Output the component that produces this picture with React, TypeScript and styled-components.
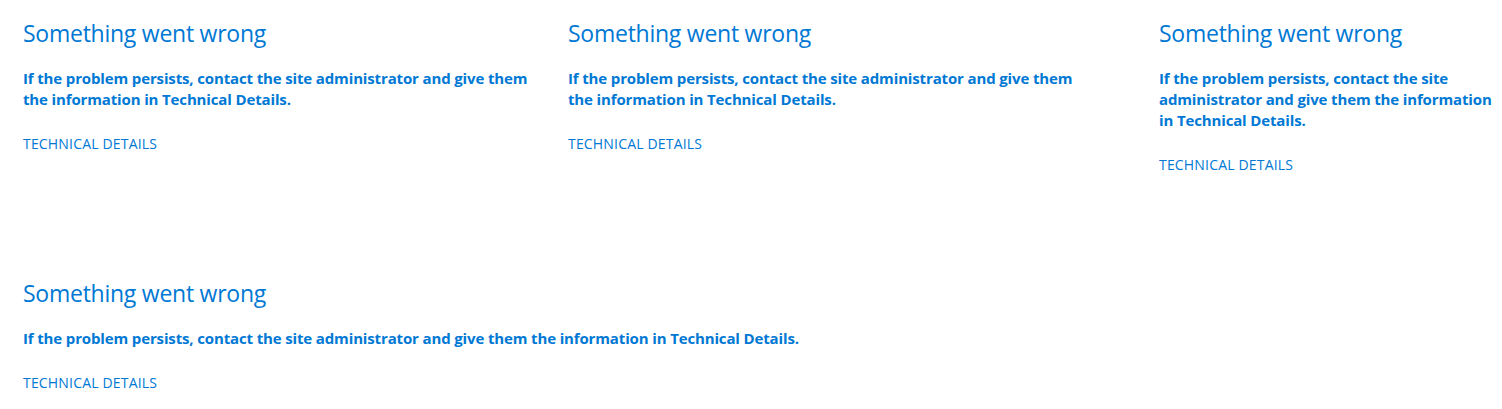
import styled, { createGlobalStyle } from 'styled-components';

const GlobalStyle = createGlobalStyle`
  html, body {
    margin: 0;
    padding: 0;
    background: #ffffff;
    overflow: hidden;
  }
  body {
    font-family: 'Open Sans', 'Noto Sans', sans-serif;
    color: #0078d4;
  }
`;

type ErrorProps = {
  textWidth?: string;
  span?: boolean;
};

// エラーカード
const ErrorCard = ({ textWidth, span }: ErrorProps) => (
  <Card $span={span}>
    <Title>Something went wrong</Title>
    <Message $width={textWidth}>
      If the problem persists, contact the site administrator and give them the information in
      Technical Details.
    </Message>
    <DetailsLink href="#">TECHNICAL DETAILS</DetailsLink>
  </Card>
);

export default function App() {
  return (
    <>
      <GlobalStyle />
      <Page>
        <ErrorCard textWidth="520px" />
        <ErrorCard textWidth="520px" />
        <ErrorCard />
        <ErrorCard span />
      </Page>
    </>
  );
}

const Page = styled.div`
  display: grid;
  grid-template-columns: 545px 591px 1fr;
  grid-template-rows: 260px auto;
  padding: 18px 0 0 23px;
`;

const Card = styled.div<{ $span?: boolean }>`
  display: flex;
  flex-direction: column;
  align-items: flex-start;
  grid-column: ${(p) => (p.$span ? '1 / -1' : 'auto')};
`;

const Title = styled.h2`
  margin: 0;
  font-size: 23px;
  line-height: 31px;
  font-weight: 400;
  letter-spacing: -0.25px;
  color: #0078d4;
`;

const Message = styled.p<{ $width?: string }>`
  margin: 19px 0 0;
  max-width: ${(p) => p.$width ?? 'none'};
  font-size: 15px;
  line-height: 21px;
  font-weight: 700;
  letter-spacing: -0.14px;
  color: #0078d4;
`;

const DetailsLink = styled.a`
  margin-top: 24px;
  font-size: 14px;
  line-height: 20px;
  letter-spacing: 0.18px;
  color: #0078d4;
  text-decoration: none;
`;
